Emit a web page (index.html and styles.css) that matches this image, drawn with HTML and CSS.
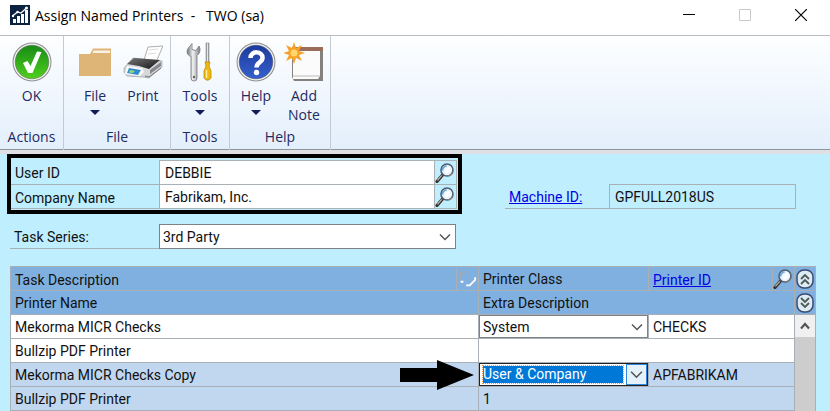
FILE: index.html
```html
<!DOCTYPE html>
<html lang="en">
<head>
  <meta charset="UTF-8">
  <meta name="viewport" content="width=device-width, initial-scale=1.0">
  <title>Assign Named Printers</title>
  <link rel="stylesheet" href="styles.css">
</head>
<body>
  <!-- Shared icons -->
  <svg class="defs" aria-hidden="true">
    <defs>
      <linearGradient id="steel" x1="0" x2="1"><stop offset="0" stop-color="#6f7276"/><stop offset=".45" stop-color="#f2f2f2"/><stop offset="1" stop-color="#777a7e"/></linearGradient>
      <linearGradient id="green" x1="0" y1="0" x2="0" y2="1"><stop offset="0" stop-color="#178a17"/><stop offset="1" stop-color="#4fd01c"/></linearGradient>
      <linearGradient id="blue" x1="0" y1="0" x2="0" y2="1"><stop offset="0" stop-color="#1d3a9c"/><stop offset="1" stop-color="#3560cc"/></linearGradient>
      <linearGradient id="dark" x1="0" y1="0" x2="1" y2="1"><stop offset="0" stop-color="#777"/><stop offset="1" stop-color="#161616"/></linearGradient>
      <symbol id="lens" viewBox="0 0 20 20">
        <path d="M2 18.500 7.500 12" stroke="#333" stroke-width="3.200" stroke-linecap="round"/>
        <path d="M2.400 17.300 6.800 12.300" stroke="#c9b8a6" stroke-width="1.200"/>
        <circle cx="12" cy="7" r="6" fill="#e9f6ff" stroke="#52606e" stroke-width="1.600"/>
        <path d="M7.600 7.500a4.300 4.300 0 0 1 4-4.600" fill="none" stroke="#6ba3dc" stroke-width="1.600"/>
        <path d="m10 8 5-4M11 10l4-3" stroke="#fff" stroke-width="2"/>
        <path d="M17.500 9.500a6 6 0 0 1-4 3.500" fill="none" stroke="#8d7b72" stroke-width="1.400"/>
      </symbol>
      <symbol id="chevron" viewBox="0 0 12 8"><path d="m1 1.500 5 5 5-5" fill="none" stroke="#555" stroke-width="1.500"/></symbol>
    </defs>
  </svg>

  <!-- Title bar -->
  <header class="titlebar">
    <svg class="app-icon" viewBox="0 0 20 20" aria-hidden="true">
      <path fill="#0c2340" d="M0 0h20v20H0z"/>
      <path fill="#fff" d="M3 14h3v4H3zM7 11h3v7H7zM11 9h3v9h-3zM15 5h3v13h-3z"/>
      <path d="m2.500 11 5-4 3.500 1 6-5.500" fill="none" stroke="#fff" stroke-width="1.300"/>
      <circle cx="3" cy="11" r="1.200" fill="#fff"/><circle cx="7.500" cy="7" r="1.200" fill="#fff"/><circle cx="16.500" cy="3" r="1.500" fill="#fff"/>
    </svg>
    <h1>Assign Named Printers &nbsp;- &nbsp; TWO (sa)</h1>
    <button class="window-button" aria-label="Minimize"><svg viewBox="0 0 12 12"><path d="M0 5.500h12" stroke="#000"/></svg></button>
    <button class="window-button" aria-label="Maximize" disabled><svg viewBox="0 0 12 12"><path d="M.5.5h11v11H.5z" fill="none" stroke="#c8c8c8"/></svg></button>
    <button class="window-button" aria-label="Close"><svg viewBox="0 0 12 12"><path d="m0 0 12 12M12 0 0 12" stroke="#000" stroke-width="1.200"/></svg></button>
  </header>

  <!-- Ribbon -->
  <nav class="ribbon">
    <section class="group actions">
      <div class="tools">
        <button class="tool">
          <svg viewBox="0 0 40 40">
            <circle cx="20" cy="20" r="19.500" fill="#8d8d8d"/><circle cx="20" cy="20" r="18.500" fill="#f4f4f4"/>
            <circle cx="20" cy="20" r="16.800" fill="url(#green)" stroke="#5c6b5c" stroke-width=".6"/>
            <path d="m11 21 4.500-2 3 5L25 9.500l4.500.5-9 21H16z" fill="#fff"/>
          </svg>
          <span>OK</span>
        </button>
      </div>
      <h2>Actions</h2>
    </section>
    <section class="group file">
      <div class="tools">
        <button class="tool">
          <svg viewBox="0 0 40 40">
            <path d="M4 12h11l3-5.500h18V34H4z" fill="#deb477"/>
            <path d="M18.500 8.500H35V11H17.500z" fill="#f7f2e8"/>
          </svg>
          <span>File</span><i class="caret"></i>
        </button>
        <button class="tool">
          <svg viewBox="0 0 40 40">
            <path d="m21 18 4-13 15-1-7 16z" fill="#fff" stroke="#999" stroke-width=".8"/>
            <path d="m26 8 9-1M25 12l8-1" stroke="#ddd"/>
            <path d="m1 26 9-10 29 3v6L26 36l-6-1-16-1-3-4z" fill="#d6d7d9" stroke="#9b9ea2" stroke-width=".7"/>
            <path d="M4 22 11 16l26 2-11 9-10-3z" fill="url(#dark)"/>
            <path d="m27 28 11-8v4l-11 8z" fill="#85888c"/>
            <path d="m4 24 15 2 2 4-4 4-15-2z" fill="#fafafa"/>
            <path d="m6 26 12 2-3 5-11-2z" fill="#3289d2"/><path d="m7 28 5 1-2 2-4-.5z" fill="#8fe06d"/>
            <path d="m22 34 4 1 12-9" fill="none" stroke="#74777b"/>
          </svg>
          <span>Print</span>
        </button>
      </div>
      <h2>File</h2>
    </section>
    <section class="group utilities">
      <div class="tools">
        <button class="tool">
          <svg viewBox="0 0 40 40">
            <path d="M12 1.500v6l4 1 3-4.500a7 7 0 0 1-2 9.500V36a3 3 0 0 1-6 0V14.500C6.500 13 6.500 9 8 6.500z" fill="url(#steel)" stroke="#77797c" stroke-width=".8"/>
            <path d="M26 1h3v21h-3z" fill="url(#steel)" stroke="#888" stroke-width=".6"/>
            <path d="M25 20h5l-1 4 2 5v7q-3.500 4.500-7 0v-7l2-5z" fill="#f2b90c" stroke="#bd8b0a" stroke-width=".8"/>
            <path d="M26.500 28v8" stroke="#fff0a0" stroke-width="1.500"/>
            <circle cx="14" cy="35" r="1.200" fill="#666"/>
          </svg>
          <span>Tools</span><i class="caret"></i>
        </button>
      </div>
      <h2>Tools</h2>
    </section>
    <section class="group help">
      <div class="tools">
        <button class="tool">
          <svg viewBox="0 0 40 40">
            <circle cx="20" cy="20" r="19.500" fill="#8d8d8d"/><circle cx="20" cy="20" r="18.500" fill="#f4f4f4"/>
            <circle cx="20" cy="20" r="16.800" fill="url(#blue)" stroke="#46506e" stroke-width=".6"/>
            <path d="M14.500 16c0-8 12.500-7 12 0 0 4.500-6 4-6 9.500" fill="none" stroke="#fff" stroke-width="4.500"/>
            <circle cx="20.500" cy="30.500" r="2.700" fill="#fff"/>
          </svg>
          <span>Help</span><i class="caret"></i>
        </button>
        <button class="tool">
          <svg viewBox="0 0 40 40">
            <path d="M8 5h31v34H10l-2-4z" fill="#85817c"/>
            <path d="M8 5h31v4H8z" fill="#996d59"/>
            <path d="M9 9h27v25l-2 3H9z" fill="#fbfbfb"/>
            <path d="M9 34h27" stroke="#bbb"/>
            <path d="m10 0 2 6 6-3-3 6 6 2-6 2 3 6-6-3-2 6-2-6-6 3 3-6-6-2 6-2-3-6 6 3z" fill="#f7a02a"/>
            <circle cx="10" cy="11" r="3.500" fill="#ffd76b"/>
          </svg>
          <span>Add Note</span>
        </button>
      </div>
      <h2>Help</h2>
    </section>
  </nav>

  <!-- Form -->
  <main class="form">
    <div class="form-top">
      <div class="framed">
        <div class="field">
          <label for="userId">User ID</label>
          <input type="text" id="userId" value="DEBBIE">
          <button class="lookup" aria-label="Look up user"><svg><use href="#lens"/></svg></button>
        </div>
        <div class="field">
          <label for="companyName">Company Name</label>
          <input type="text" id="companyName" value="Fabrikam, Inc.">
          <button class="lookup" aria-label="Look up company"><svg><use href="#lens"/></svg></button>
        </div>
      </div>
      <div class="field machine">
        <label for="machineId"><a href="#machineId">Machine ID:</a></label>
        <input type="text" id="machineId" value="GPFULL2018US" readonly>
      </div>
    </div>
    <div class="field series">
      <label for="taskSeries">Task Series:</label>
      <div class="combo">
        <select id="taskSeries"><option>3rd Party</option></select>
        <svg class="chevron"><use href="#chevron"/></svg>
      </div>
    </div>

    <!-- Printer assignments -->
    <div class="list">
      <table>
        <colgroup><col><col class="col-class"><col class="col-id"></colgroup>
        <thead>
          <tr>
            <th><div class="head"><span>Task Description</span>
              <button class="head-button" aria-label="Task note"><svg viewBox="0 0 20 22"><path d="M1 13 4 6l5-4M3 4l6-1M1 9l4-5" stroke="#a2a8ad" stroke-width="1.500" fill="none"/><path d="M3 14h3M9 18h4l6-6V9" stroke="#fff" stroke-width="2" fill="none"/></svg></button></div></th>
            <th>Printer Class</th>
            <th><div class="head"><a href="#printers">Printer ID</a>
              <button class="head-button" aria-label="Look up printer"><svg><use href="#lens"/></svg></button></div></th>
          </tr>
          <tr><th>Printer Name</th><th colspan="2">Extra Description</th></tr>
        </thead>
        <tbody id="printers">
          <tr>
            <td>Mekorma MICR Checks</td>
            <td class="combo-cell"><div class="combo">
              <select aria-label="Printer class"><option>System</option></select>
              <svg class="chevron"><use href="#chevron"/></svg>
            </div></td>
            <td>CHECKS</td>
          </tr>
          <tr><td>Bullzip PDF Printer</td><td colspan="2"></td></tr>
          <tr class="selected">
            <td class="pointed">Mekorma MICR Checks Copy
              <svg class="pointer" viewBox="0 0 74 30" aria-hidden="true"><path d="M0 8h37V0l37 15-37 15v-8H0z"/></svg></td>
            <td class="combo-cell"><div class="combo active">
              <select aria-label="Printer class"><option>User &amp; Company</option></select>
              <svg class="chevron"><use href="#chevron"/></svg>
            </div></td>
            <td>APFABRIKAM</td>
          </tr>
          <tr class="selected"><td>Bullzip PDF Printer</td><td colspan="2">1</td></tr>
        </tbody>
      </table>
      <div class="side">
        <button class="expand" aria-label="Collapse"><svg viewBox="0 0 20 20"><rect x="2" y="1" width="16" height="18" rx="7" fill="#dcecf2" stroke="#3c4870" stroke-width="1.500"/><path d="m6 10 4-4 4 4M6 15l4-4 4 4" fill="none" stroke="#4c5a57" stroke-width="1.800"/></svg></button>
        <button class="expand" aria-label="Expand"><svg viewBox="0 0 20 20"><rect x="2" y="1" width="16" height="18" rx="7" fill="#dcecf2" stroke="#3c4870" stroke-width="1.500"/><path d="m6 5 4 4 4-4M6 10l4 4 4-4" fill="none" stroke="#4c5a57" stroke-width="1.800"/></svg></button>
        <button class="scroll-up" aria-label="Scroll up"><svg viewBox="0 0 12 8"><path d="m2 6.500 4-4.500 4 4.500" fill="none" stroke="#555" stroke-width="2.200"/></svg></button>
        <div class="thumb"></div>
      </div>
    </div>
  </main>
</body>
</html>
```
FILE: styles.css
```css
* {
  box-sizing: border-box;
}

body {
  margin: 0;
  height: 100vh;
  display: flex;
  flex-direction: column;
  font-family: Roboto, "Liberation Sans", sans-serif;
  font-size: 14px;
  color: #111;
  background-color: #bfeeff;
}

button {
  padding: 0;
  border: none;
  background: none;
  font: inherit;
  color: inherit;
}

.defs {
  position: absolute;
  width: 0;
  height: 0;
}

/* Title bar */
.titlebar {
  display: flex;
  flex: none;
  height: 35px;
  padding: 0 1px 5px 10px;
  align-items: center;
  background-color: #fff;
}

.app-icon {
  width: 20px;
  height: 20px;
}

.titlebar h1 {
  flex: 1;
  margin: 0 0 0 5px;
  font: 400 14px "Open Sans", sans-serif;
  color: #000;
}

.window-button {
  width: 56px;
  height: 30px;
}

.window-button svg {
  display: block;
  width: 12px;
  height: 12px;
  margin: auto;
}

/* Ribbon */
.ribbon {
  display: flex;
  flex: none;
  height: 119px;
  border-top: 1px solid #b9bcc0;
  border-bottom: 4px solid #dfdfe6;
  background: linear-gradient(#fdfeff, #e3effc);
  box-shadow: inset 0 -1px #8e9299;
  font-family: "Open Sans", sans-serif;
  color: #1e2a60;
}

.group {
  display: flex;
  flex-direction: column;
  justify-content: space-between;
  padding: 6px 0 2px;
  border-right: 1px solid #c3cad3;
}

.group.actions {
  width: 64px;
}

.group.file {
  width: 107px;
}

.group.utilities {
  width: 59px;
}

.group.help {
  width: 101px;
}

.tools {
  display: flex;
  justify-content: center;
}

.file .tools {
  padding-left: 4px;
}

.tool {
  display: flex;
  flex-direction: column;
  align-items: center;
  width: 48px;
  line-height: 19px;
}

.tool svg {
  width: 40px;
  height: 40px;
  margin-bottom: 4px;
}

.caret {
  margin-top: 5px;
  border: 5px solid transparent;
  border-top-color: #101c5c;
  border-bottom: none;
}

.group h2 {
  margin: 0;
  font-size: 14px;
  font-weight: 400;
  line-height: 22px;
  text-align: center;
}

/* Form fields */
.form {
  display: flex;
  flex: 1;
  flex-direction: column;
  min-height: 0;
  padding: 0 14px 0 7px;
}

.form-top {
  display: flex;
  justify-content: space-between;
  align-items: flex-end;
}

.framed {
  width: 455px;
  padding: 2px 1px 1px 0;
  border: 4px solid #000;
}

.field {
  display: flex;
  height: 24px;
  border-bottom: 1px solid #a9b1b6;
}

.field label {
  width: 148px;
  padding: 2px 4px 0;
  line-height: 22px;
}

.field input {
  flex: 1;
  min-width: 0;
  padding: 0 5px;
  border: solid #a9b1b6;
  border-width: 0 0 0 1px;
  border-radius: 0;
  font: inherit;
  color: inherit;
  background-color: #fff;
}

.lookup {
  width: 23px;
  border: solid #a9b1b6;
  border-width: 0 1px;
}

.lookup svg {
  display: block;
  width: 20px;
  height: 20px;
}

.framed .field:first-child {
  height: 25px;
}

.framed .field:first-child input,
.framed .field:first-child .lookup {
  border-top-width: 1px;
}

.field.machine {
  width: 291px;
  height: 25px;
  margin: 0 20px 5px 0;
}

.machine label {
  width: 104px;
}

.machine input {
  border-width: 1px 1px 0;
  background-color: transparent;
}

a {
  color: #0000e6;
}

.field.series {
  width: 446px;
  height: 25px;
  margin: 10px 0 0 3px;
}

.combo {
  display: grid;
  grid-template-rows: minmax(0, 1fr);
  flex: 1;
  height: 25px;
  border: 1px solid #7c8286;
  background-color: #fff;
}

.series label {
  width: 149px;
}

.combo select {
  grid-area: 1 / 1;
  width: 100%;
  padding: 0 3px;
  border: none;
  border-radius: 0;
  outline: none;
  appearance: none;
  font: inherit;
  color: inherit;
  background: none;
}

.chevron {
  grid-area: 1 / 1;
  align-self: center;
  justify-self: end;
  width: 12px;
  height: 8px;
  margin-right: 4px;
  pointer-events: none;
}

/* Printer list */
.list {
  display: flex;
  flex: 1;
  min-height: 0;
  margin: 17px 0 0 3px;
  overflow: hidden;
}

table {
  flex: 1;
  align-self: flex-start;
  table-layout: fixed;
  border-collapse: collapse;
}

.col-class {
  width: 170px;
}

.col-id {
  width: 146px;
}

th,
td {
  position: relative;
  height: 24px;
  padding: 0 4px;
  border: 1px solid #a9afb6;
  font-weight: 400;
  line-height: 20px;
  text-align: left;
  white-space: nowrap;
}

th {
  background-color: #80b0e0;
}

td {
  background-color: #fff;
}

.selected td {
  background-color: #c0d7ef;
}

.head {
  display: flex;
  justify-content: space-between;
  height: 22px;
  line-height: 24px;
  margin-right: -4px;
}

.head-button {
  width: 22px;
  border-left: 1px solid #a9afb6;
}

.head-button svg {
  display: block;
  width: 20px;
  height: 20px;
}

td.combo-cell {
  padding: 0;
}

.combo-cell .combo {
  height: 23px;
}

.combo.active {
  grid-template-columns: minmax(0, 1fr) 21px;
  border-color: #222;
}

.combo.active select {
  margin: 2px 3px;
  width: auto;
  min-height: 0;
  padding: 0;
  line-height: 17px;
  outline: 1px dotted #e89a50;
  color: #fff;
  background-color: #0078d7;
}

.combo.active .chevron {
  grid-area: 1 / 2;
  width: 21px;
  height: 21px;
  margin: 0;
  padding: 5px 3px;
  border: 1px solid #3088dc;
  background-color: #e5f1fb;
}

/* Arrow over the end of the first column */
.pointed {
  z-index: 1;
}

.pointer {
  position: absolute;
  top: -3px;
  right: 4px;
  width: 74px;
  height: 30px;
}

.side {
  display: flex;
  flex-direction: column;
  width: 21px;
  border: solid #a9afb6;
  border-width: 1px 1px 0 0;
  background-color: #f0f0f0;
}

.expand {
  height: 24px;
  border-bottom: 1px solid #a9afb6;
  background-color: #80b0e0;
}

.expand svg {
  display: block;
  width: 20px;
  height: 22px;
}

.scroll-up {
  height: 22px;
}

.scroll-up svg {
  display: block;
  width: 12px;
  height: 8px;
  margin: auto;
}

.thumb {
  flex: 1;
  background-color: #cdcdcd;
}
```
